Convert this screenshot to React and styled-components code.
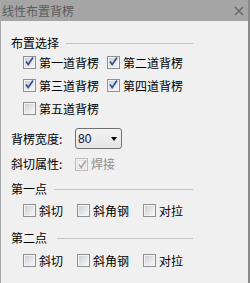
import React from "react";
import styled, { createGlobalStyle } from "styled-components";

const Global = createGlobalStyle`
  html, body { margin: 0; padding: 0; background: #f0f0f0; }
  body { font-family: "Noto Sans CJK SC", "Noto Sans", sans-serif; font-size: 12px; color: #000; }
`;

const Window = styled.div`
  width: 250px;
  height: 283px;
  box-sizing: border-box;
  background: #f0f0f0;
  border-left: 1px solid #a8a8a8;
  border-right: 2px solid #8a8a8a;
  display: flex;
  flex-direction: column;
  overflow: hidden;
`;

const TitleBar = styled.div`
  height: 21px;
  flex: none;
  background: #a4a5a4;
  display: flex;
  align-items: center;
  justify-content: space-between;
  padding: 0 4px 0 2px;
  margin-left: -1px;
  margin-right: -2px;
  color: #5c5c5c;
  line-height: 21px;
`;

const Close = styled.svg`
  width: 10px;
  height: 10px;
  margin-right: 2px;
`;

const Body = styled.div`
  padding: 14px 55px 0 10px;
  display: flex;
  flex-direction: column;
`;

const GroupHeader = styled.div`
  height: 16px;
  line-height: 16px;
  display: flex;
  align-items: center;
  margin-top: ${(p) => p.$mt || 0}px;
  &::after {
    content: "";
    flex: 1;
    height: 0;
    border-top: 1px solid #c4c4c4;
    margin-left: ${(p) => p.$gap || 6}px;
    margin-top: 1px;
  }
`;

const CheckGrid = styled.div`
  display: grid;
  grid-template-columns: 84px 84px;
  grid-auto-rows: 23px;
  padding-left: 12px;
  margin-top: ${(p) => p.$mt || 0}px;
`;

const CheckRow = styled.div`
  display: flex;
  height: 23px;
  gap: 14px;
  padding-left: 12px;
  margin-top: ${(p) => p.$mt || 0}px;
`;

const CheckItem = styled.label`
  display: flex;
  align-items: center;
  gap: 3px;
  line-height: 16px;
  white-space: nowrap;
  color: ${(p) => (p.$disabled ? "#8d8d8d" : "#000")};
`;

const Box = styled.span`
  width: 13px;
  height: 13px;
  box-sizing: border-box;
  flex: none;
  border: 1px solid ${(p) => (p.$disabled ? "#bcbcbc" : "#8e8f8f")};
  background: #f4f4f4;
  padding: 1px;
  display: flex;
`;

const BoxInner = styled.span`
  flex: 1;
  position: relative;
  background: ${(p) =>
    p.$disabled
      ? "#f4f4f4"
      : "linear-gradient(135deg, #cbcfd5 0%, #e4e6e9 55%, #f6f6f6 100%)"};
  border: ${(p) => (p.$disabled ? "1px solid #e0e0e0" : "none")};
`;

const Tick = styled.svg`
  position: absolute;
  left: -1px;
  top: -2px;
  width: 11px;
  height: 11px;
`;

const FieldRow = styled.div`
  display: flex;
  align-items: center;
  height: ${(p) => p.$h || 16}px;
  margin-top: ${(p) => p.$mt || 0}px;
`;

const FieldLabel = styled.span`
  width: 64px;
  line-height: 16px;
  white-space: nowrap;
`;

const Select = styled.div`
  width: 47px;
  height: 21px;
  box-sizing: border-box;
  border: 1px solid #707070;
  border-radius: 3px;
  background: linear-gradient(#f3f3f3, #e4e4e4);
  display: flex;
  align-items: center;
  justify-content: space-between;
  padding: 0 4px 0 2px;
  font-family: "Liberation Sans", Arial, sans-serif;
  font-size: 12px;
  color: #101030;
`;

const Arrow = styled.span`
  width: 0;
  height: 0;
  border-left: 3.5px solid transparent;
  border-right: 3.5px solid transparent;
  border-top: 4px solid #000;
`;

function Check({ label, checked, disabled }) {
  return (
    <CheckItem $disabled={disabled}>
      <Box $disabled={disabled}>
        <BoxInner $disabled={disabled}>
          {checked && (
            <Tick viewBox="0 0 11 11">
              <path
                d="M2 5.5 L4.2 8.5 L9 1.5"
                fill="none"
                stroke={disabled ? "#a9a9a9" : "#3b4f8f"}
                strokeWidth="1.7"
              />
            </Tick>
          )}
        </BoxInner>
      </Box>
      {label}
    </CheckItem>
  );
}

export default function App() {
  return (
    <>
      <Global />
      <Window>
        <TitleBar>
          <span>线性布置背楞</span>
          <Close viewBox="0 0 10 10">
            <path d="M1 1 L9 9 M9 1 L1 9" stroke="#6b6b6b" strokeWidth="1.6" />
          </Close>
        </TitleBar>
        <Body>
          <GroupHeader $gap={7}>布置选择</GroupHeader>
          <CheckGrid $mt={0}>
            <Check label="第一道背楞" checked />
            <Check label="第二道背楞" checked />
            <Check label="第三道背楞" checked />
            <Check label="第四道背楞" checked />
            <Check label="第五道背楞" />
          </CheckGrid>
          <FieldRow $h={21} $mt={8}>
            <FieldLabel>背楞宽度:</FieldLabel>
            <Select>
              <span>80</span>
              <Arrow />
            </Select>
          </FieldRow>
          <FieldRow $h={16} $mt={7}>
            <FieldLabel>斜切属性:</FieldLabel>
            <Check label="焊接" checked disabled />
          </FieldRow>
          <GroupHeader $mt={9} $gap={7}>第一点</GroupHeader>
          <CheckRow $mt={2}>
            <Check label="斜切" />
            <Check label="斜角钢" />
            <Check label="对拉" />
          </CheckRow>
          <GroupHeader $mt={8} $gap={10}>第二点</GroupHeader>
          <CheckRow $mt={3}>
            <Check label="斜切" />
            <Check label="斜角钢" />
            <Check label="对拉" />
          </CheckRow>
        </Body>
      </Window>
    </>
  );
}
